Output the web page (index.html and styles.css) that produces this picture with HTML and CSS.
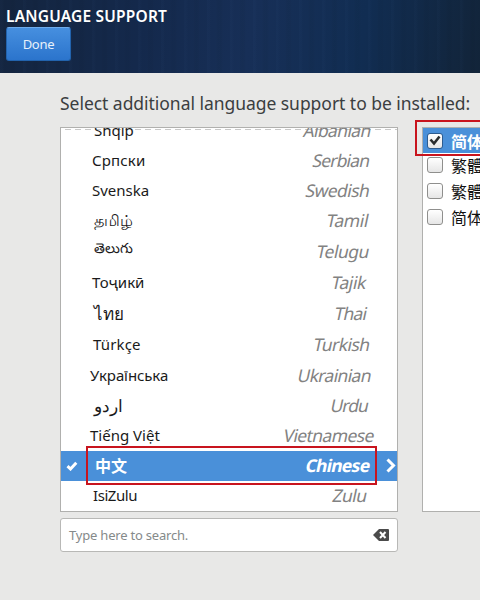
FILE: index.html
```html
<!DOCTYPE html>
<html lang="en">
<head>
<meta charset="utf-8">
<title>Language Support</title>
<link rel="stylesheet" href="styles.css">
</head>
<body>
<header class="header">
  <h1 class="title"><span data-fit="160">LANGUAGE SUPPORT</span></h1>
  <button class="done"><span data-fit="31">Done</span></button>
</header>
<main class="content">
  <p class="prompt"><span data-fit="409">Select additional language support to be installed:</span></p>
  <div class="columns">
    <div class="left">
      <div class="list">
        <div class="row"><span class="native" data-fit="39">Shqip</span><span class="english" data-fit="66">Albanian</span></div>
        <div class="row n2 e1"><span class="native" data-fit="53">Српски</span><span class="english" data-fit="56">Serbian</span></div>
        <div class="row n2 e1"><span class="native" data-fit="56">Svenska</span><span class="english" data-fit="63">Swedish</span></div>
        <div class="row e2"><span class="native indic">தமிழ்</span><span class="english" data-fit="41">Tamil</span></div>
        <div class="row tall e2"><span class="native indic telugu">తెలుగు</span><span class="english" data-fit="51">Telugu</span></div>
        <div class="row tall n2 e4"><span class="native" data-fit="51">Тоҷикӣ</span><span class="english" data-fit="34">Tajik</span></div>
        <div class="row tall e4"><span class="native thai">ไทย</span><span class="english" data-fit="31">Thai</span></div>
        <div class="row tall n1 e1"><span class="native" data-fit="47">Türkçe</span><span class="english" data-fit="55">Turkish</span></div>
        <div class="row n4"><span class="native" data-fit="77">Українська</span><span class="english" data-fit="72">Ukrainian</span></div>
        <div class="row e3"><span class="native urdu" dir="rtl">اردو</span><span class="english" data-fit="36">Urdu</span></div>
        <div class="row n4 em"><span class="native" data-fit="69">Tiếng Việt</span><span class="english" data-fit="89">Vietnamese</span></div>
        <div class="row selected e1">
          <svg class="tick" viewBox="0 0 12 10"><path d="M1.500 5.200 4.500 8 10.300 1.800"/></svg>
          <span class="native">中文</span><span class="english" data-fit="63">Chinese</span>
          <svg class="chevron" viewBox="0 0 10 15"><path d="m1.500 1.500 6 6-6 6"/></svg>
          <i class="mark"></i>
        </div>
        <div class="row n1 e4"><span class="native" data-fit="43">IsiZulu</span><span class="english" data-fit="33">Zulu</span></div>
      </div>
      <div class="search">
        <span data-fit="118">Type here to search.</span>
        <svg class="clear" viewBox="0 0 16 12"><path class="key" d="M6 0h9q1 0 1 1v10q0 1-1 1H6L0 6z"/><path class="x" d="m7 3 5.500 6M12.500 3 7 9"/></svg>
      </div>
    </div>
    <div class="right">
      <div class="locale on"><span class="box"><svg viewBox="0 0 12 11"><path d="m1.500 4.500 3.500 4 5.500-7"/></svg></span><span>简体</span></div>
      <div class="locale"><span class="box"></span><span>繁體</span></div>
      <div class="locale"><span class="box"></span><span>繁體</span></div>
      <div class="locale"><span class="box"></span><span>简体</span></div>
      <i class="mark"></i>
    </div>
  </div>
</main>
<script src="fit.js"></script>
</body>
</html>
```
FILE: styles.css
```css
* { box-sizing: border-box; }
html { overflow: hidden; }
body {
  margin: 0;
  width: 480px;
  height: 600px;
  overflow: hidden;
  background: #e8e8e7;
  color: #1a1a1a;
  font-family: "Noto Sans", "Open Sans", "Noto Sans CJK SC", sans-serif;
  white-space: nowrap;
}
.header {
  height: 73px;
  padding: 6px;
  background:
    repeating-linear-gradient(90deg, rgba(80,120,180,.03) 0 2px, transparent 4px 9px, rgba(0,0,0,.03) 11px 14px, transparent 16px 23px),
    linear-gradient(100deg, #14253f 0%, #14294c 30%, #172f57 52%, #112d52 75%, #122439 100%);
}
.title {
  margin: 0;
  height: 21px;
  color: #fff;
  font-size: 15.500px;
  font-weight: 600;
  line-height: 21px;
}
.done {
  display: block;
  width: 65px;
  height: 34px;
  padding: 0 0 1px;
  border: 1px solid #2263ad;
  border-top-color: #6eacec;
  border-radius: 3px;
  background: linear-gradient(#468fdf, #2b74cc);
  color: #e8f1fb;
  font: 13px/30px "Noto Sans", sans-serif;
}
.content { padding: 20px 0 0 60px; }
.prompt {
  margin: 0 0 10px;
  height: 24px;
  color: #3b3e40;
  font-size: 17.500px;
  line-height: 20px;
}
.columns { display: flex; gap: 24px; }
.left { flex: none; width: 338px; }
.list {
  position: relative;
  height: 385px;
  border: 1px solid #b0b0ae;
  background: #fff;
  overflow: hidden;
}
.list::before {
  content: "";
  position: absolute;
  top: 1px;
  left: 0;
  right: 0;
  height: 1px;
  background: repeating-linear-gradient(90deg, transparent 0 4px, #c9c9c9 4px 10px);
}
.row {
  position: relative;
  display: flex;
  justify-content: space-between;
  align-items: center;
  height: 30px;
  padding: 0 27px 2px 33px;
}
.row:first-child { margin-top: -12px; }
.tall { height: 31.250px; }
.native { font-size: 15px; }
.english { color: #828282; font-size: 17.500px; transform: translateX(1px) skewX(-12deg); }
.n1 { padding-left: 32px; }
.n2 { padding-left: 31px; }
.n4 { padding-left: 29px; }
.e1 { padding-right: 28px; }
.e2 { padding-right: 29px; }
.e3 { padding-right: 30px; }
.e4 { padding-right: 31px; }
.em { padding-right: 24px; }
.indic { font-size: 16px; }
.telugu { font-size: 14px; padding-bottom: 3px; }
.thai { font-size: 17px; }
.urdu { font-size: 17px; }
.selected { background: #4a90d9; color: #fff; font-weight: 700; }
.selected .native { font-size: 16px; padding-left: 1px; font-family: "Noto Sans CJK SC", sans-serif; }
.selected .english { color: #fff; }
.tick, .chevron { position: absolute; fill: none; stroke: #fff; }
.tick { left: 5px; top: 10px; width: 12px; height: 10px; stroke-width: 3; }
.chevron { right: 1px; top: 7px; width: 10px; height: 15px; stroke-width: 3; }
.mark { position: absolute; z-index: 2; border: 2px solid #c8141e; }
.row .mark { left: 25px; top: -5px; width: 291px; height: 39px; }
.search {
  display: flex;
  justify-content: space-between;
  align-items: center;
  height: 34px;
  margin-top: 6px;
  padding: 0 8px;
  border: 1px solid #b8b8b6;
  border-radius: 3px;
  background: #fff;
  color: #858a8a;
  font-size: 13px;
}
.search span { padding-bottom: 1px; }
.clear { width: 16px; height: 12px; }
.key { fill: #4b4b4b; }
.x { fill: none; stroke: #fff; stroke-width: 2; }
.right {
  position: relative;
  flex: 1;
  min-width: 0;
  height: 385px;
  border: 1px solid #b0b0ae;
  border-right: 0;
  background: #fff;
}
.right .mark { left: -8px; top: -8px; right: 0; height: 36px; border-right: 0; }
.locale {
  display: flex;
  align-items: center;
  gap: 8px;
  height: 26px;
  padding: 0 0 2px 4px;
  overflow: hidden;
  color: #111;
  font: 16px/24px "Noto Sans CJK SC", sans-serif;
}
.on { height: 25px; padding-bottom: 0; background: #4a90d9; color: #fff; font-weight: 700; }
.box {
  flex: none;
  display: flex;
  align-items: center;
  justify-content: center;
  width: 16px;
  height: 16px;
  border: 1px solid #8f8f8d;
  border-radius: 3px;
  background: linear-gradient(#fff, #e6e6e6);
}
.on .box { border-color: #2d5c8f; }
.box svg { width: 12px; height: 11px; fill: none; stroke: #2a2d2e; stroke-width: 2.600; }
```
FILE: fit.js
```js
document.querySelectorAll("[data-fit]").forEach(function (el) {
  var width = el.offsetWidth;
  var gap = (Number(el.dataset.fit) + 1 - width) / el.textContent.length;
  el.style.letterSpacing = gap.toFixed(3) + "px";
});
```
